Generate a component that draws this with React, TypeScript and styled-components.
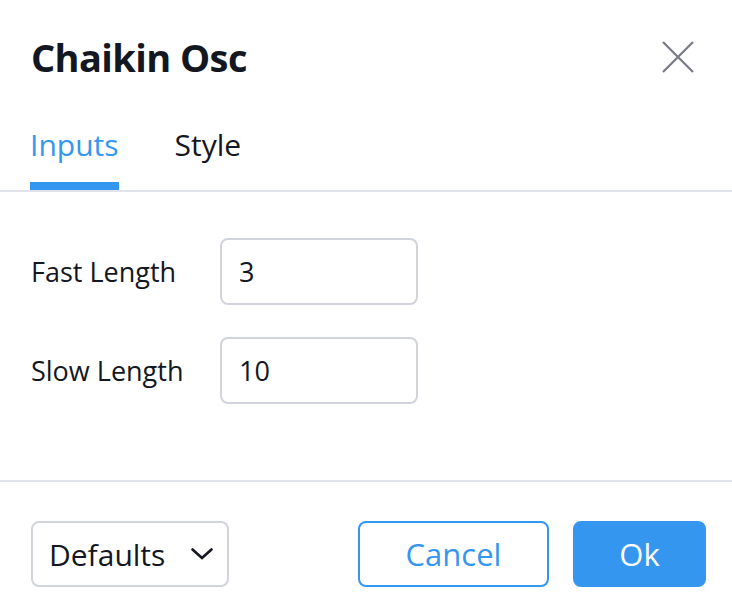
import React from "react";
import styled, { createGlobalStyle } from "styled-components";

const GlobalStyle = createGlobalStyle`
  html, body {
    margin: 0;
    padding: 0;
    background: #ffffff;
  }
  body {
    font-family: "Open Sans", "Noto Sans", sans-serif;
    color: #131722;
  }
`;

const blue = "#3596ef";
const line = "#e0e3eb";

const Dialog = styled.div`
  width: 732px;
  height: 612px;
  display: flex;
  flex-direction: column;
  background: #fff;
`;

const Header = styled.div`
  display: flex;
  align-items: center;
  justify-content: space-between;
  height: 114px;
  padding: 0 38px 0 31px;
  box-sizing: border-box;
`;

const Title = styled.h1`
  margin: 0;
  font-size: 38px;
  font-weight: 700;
  letter-spacing: -0.6px;
  color: #131722;
`;

const CloseButton = styled.button`
  border: 0;
  background: none;
  padding: 0;
  width: 32px;
  height: 32px;
  display: flex;
  color: #787b86;
`;

const Tabs = styled.div`
  display: flex;
  gap: 56px;
  padding: 0 30px;
  border-bottom: 2px solid ${line};
  height: 76px;
  box-sizing: content-box;
`;

const Tab = styled.div<{ $active?: boolean }>`
  position: relative;
  display: flex;
  align-items: flex-start;
  padding-top: 10px;
  font-size: 30px;
  color: ${(p) => (p.$active ? blue : "#131722")};
  &::after {
    content: "";
    display: ${(p) => (p.$active ? "block" : "none")};
    position: absolute;
    left: 0;
    right: 0;
    bottom: 0;
    height: 8px;
    background: ${blue};
  }
`;

const Body = styled.div`
  flex: 1;
  display: flex;
  flex-direction: column;
  gap: 32px;
  padding: 46px 31px 0;
`;

const Row = styled.div`
  display: flex;
  align-items: center;
`;

const Label = styled.label`
  width: 189px;
  font-size: 27px;
  color: #131722;
`;

const Field = styled.div`
  width: 198px;
  height: 67px;
  box-sizing: border-box;
  border: 2px solid #d1d4dc;
  border-radius: 8px;
  display: flex;
  align-items: center;
  padding: 0 17px;
  font-size: 27px;
  color: #131722;
`;

const Footer = styled.div`
  border-top: 2px solid ${line};
  height: 132px;
  box-sizing: border-box;
  display: flex;
  align-items: flex-start;
  padding: 39px 26px 0 31px;
`;

const Select = styled.div`
  width: 198px;
  height: 66px;
  box-sizing: border-box;
  border: 2px solid #d1d4dc;
  border-radius: 8px;
  display: flex;
  align-items: center;
  justify-content: space-between;
  padding: 0 14px 0 16px;
  font-size: 30px;
  color: #131722;
`;

const Actions = styled.div`
  margin-left: auto;
  display: flex;
  gap: 24px;
`;

const Button = styled.button<{ $primary?: boolean }>`
  height: 66px;
  width: ${(p) => (p.$primary ? "133px" : "191px")};
  box-sizing: border-box;
  border-radius: 8px;
  border: 2px solid ${blue};
  background: ${(p) => (p.$primary ? blue : "#fff")};
  color: ${(p) => (p.$primary ? "#fff" : blue)};
  font-family: inherit;
  font-size: 31px;
  padding: 0;
`;

export default function App() {
  return (
    <Dialog>
      <GlobalStyle />
      <Header>
        <Title>Chaikin Osc</Title>
        <CloseButton aria-label="Close">
          <svg width="32" height="32" viewBox="0 0 32 32">
            <path
              d="M1 1L31 31M31 1L1 31"
              stroke="currentColor"
              strokeWidth="2.2"
              fill="none"
            />
          </svg>
        </CloseButton>
      </Header>
      <Tabs>
        <Tab $active>Inputs</Tab>
        <Tab>Style</Tab>
      </Tabs>
      <Body>
        <Row>
          <Label>Fast Length</Label>
          <Field>3</Field>
        </Row>
        <Row>
          <Label>Slow Length</Label>
          <Field>10</Field>
        </Row>
      </Body>
      <Footer>
        <Select>
          Defaults
          <svg width="22" height="12" viewBox="0 0 22 12">
            <path
              d="M1.5 1.5L11 10L20.5 1.5"
              stroke="#131722"
              strokeWidth="2.6"
              fill="none"
              strokeLinecap="round"
            />
          </svg>
        </Select>
        <Actions>
          <Button>Cancel</Button>
          <Button $primary>Ok</Button>
        </Actions>
      </Footer>
    </Dialog>
  );
}
